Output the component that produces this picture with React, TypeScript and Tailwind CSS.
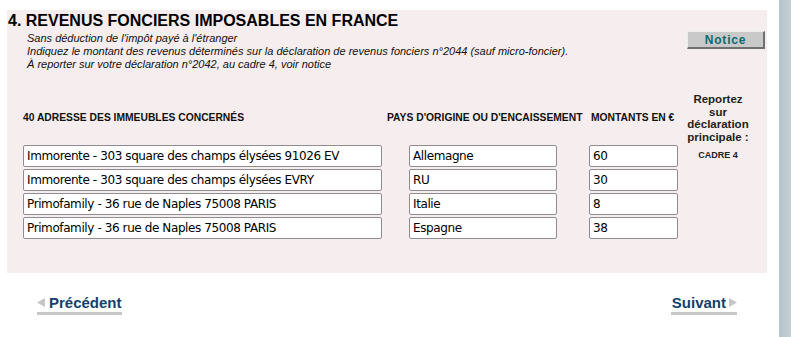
const rows = [
  { address: "Immorente - 303 square des champs élysées 91026 EV", country: "Allemagne", amount: "60" },
  { address: "Immorente - 303 square des champs élysées EVRY", country: "RU", amount: "30" },
  { address: "Primofamily - 36 rue de Naples 75008 PARIS", country: "Italie", amount: "8" },
  { address: "Primofamily - 36 rue de Naples 75008 PARIS", country: "Espagne", amount: "38" },
]

const Field = ({ value, width }: { value: string; width: string }) => (
  <div
    className={`${width} h-[22px] bg-white border border-[#8e8b94] rounded-[2px] pl-[3px] flex items-center text-[12px] tracking-[-0.4px] text-black font-['DejaVu_Sans',Verdana,sans-serif] whitespace-nowrap overflow-hidden`}
  >
    {value}
  </div>
)

const Arrow = ({ dir }: { dir: "left" | "right" }) => (
  <svg width="8" height="9" viewBox="0 0 8 9" className="shrink-0">
    {dir === "left" ? (
      <polygon points="8,0 8,9 0,4.5" fill="#c6c6c6" />
    ) : (
      <polygon points="0,0 0,9 8,4.5" fill="#c6c6c6" />
    )}
  </svg>
)

export default function App() {
  return (
    <div className="w-[791px] h-[337px] flex bg-white overflow-hidden font-['Liberation_Sans',Arial,sans-serif] text-[#111]">
      <div className="w-[779px] shrink-0">
        {/* Section panel */}
        <div className="ml-[7px] mt-[10px] w-[760px] h-[263px] bg-[#f6edee]">
          <h2 className="pl-[1px] pt-[2px] text-[16px] leading-[18px] font-bold text-black">
            4. REVENUS FONCIERS IMPOSABLES EN FRANCE
          </h2>

          <div className="flex justify-between items-start">
            <div className="pl-[20px] mt-[2px] text-[11px] leading-[13px] italic text-[#111]">
              <p>Sans déduction de l'impôt payé à l'étranger</p>
              <p>Indiquez le montant des revenus déterminés sur la déclaration de revenus fonciers n°2044 (sauf micro-foncier).</p>
              <p>À reporter sur votre déclaration n°2042, au cadre 4, voir notice</p>
            </div>
            <button className="mt-[1px] mr-[2px] w-[78px] h-[18px] bg-[#c9c9c9] border-t border-l border-t-[#ececec] border-l-[#ececec] border-b-2 border-r-2 border-b-[#707070] border-r-[#707070] text-[12px] font-bold tracking-[0.8px] text-[#0e6b6b] leading-none flex items-center justify-center">
              Notice
            </button>
          </div>

          {/* Column headers */}
          <div className="mt-[22px] pl-[16px] grid grid-cols-[364px_202px_91px_76px] items-center text-[10.3px] font-bold">
            <div>40 ADRESSE DES IMMEUBLES CONCERNÉS</div>
            <div>PAYS D'ORIGINE OU D'ENCAISSEMENT</div>
            <div className="pl-[2px]">MONTANTS EN €</div>
            <div className="text-center text-[11.5px] leading-[12.5px] text-[#222]">
              Reportez
              <br />
              sur
              <br />
              déclaration
              <br />
              principale :
            </div>
          </div>

          {/* Entry rows */}
          <div className="mt-[2px] pl-[16px] flex flex-col gap-[2px]">
            {rows.map((row, index) => (
              <div key={index} className="grid grid-cols-[364px_202px_91px_76px] items-center">
                <Field value={row.address} width="w-[359px]" />
                <div className="pl-[22px]">
                  <Field value={row.country} width="w-[148px]" />
                </div>
                <Field value={row.amount} width="w-[89px]" />
                <div className="text-center text-[9px] font-bold text-[#222]">{index === 0 ? "CADRE 4" : ""}</div>
              </div>
            ))}
          </div>
        </div>

        {/* Navigation */}
        <div className="mt-[21px] pl-[37px] pr-[42px] flex justify-between items-start">
          <a className="flex items-center gap-[4px] border-b-[3px] border-[#c8c8c8] pb-[1px] text-[15px] leading-[17px] font-bold text-[#123f6e]">
            <Arrow dir="left" />
            <span>Précédent</span>
          </a>
          <a className="flex items-center gap-[3px] border-b-[3px] border-[#c8c8c8] pb-[1px] pl-[1px] text-[15px] leading-[17px] font-bold text-[#123f6e]">
            <span>Suivant</span>
            <Arrow dir="right" />
          </a>
        </div>
      </div>

      {/* Side strip */}
      <div className="w-[12px] shrink-0 bg-gradient-to-r from-[#b5c3cb] to-[#c6d1d7]" />
    </div>
  )
}
